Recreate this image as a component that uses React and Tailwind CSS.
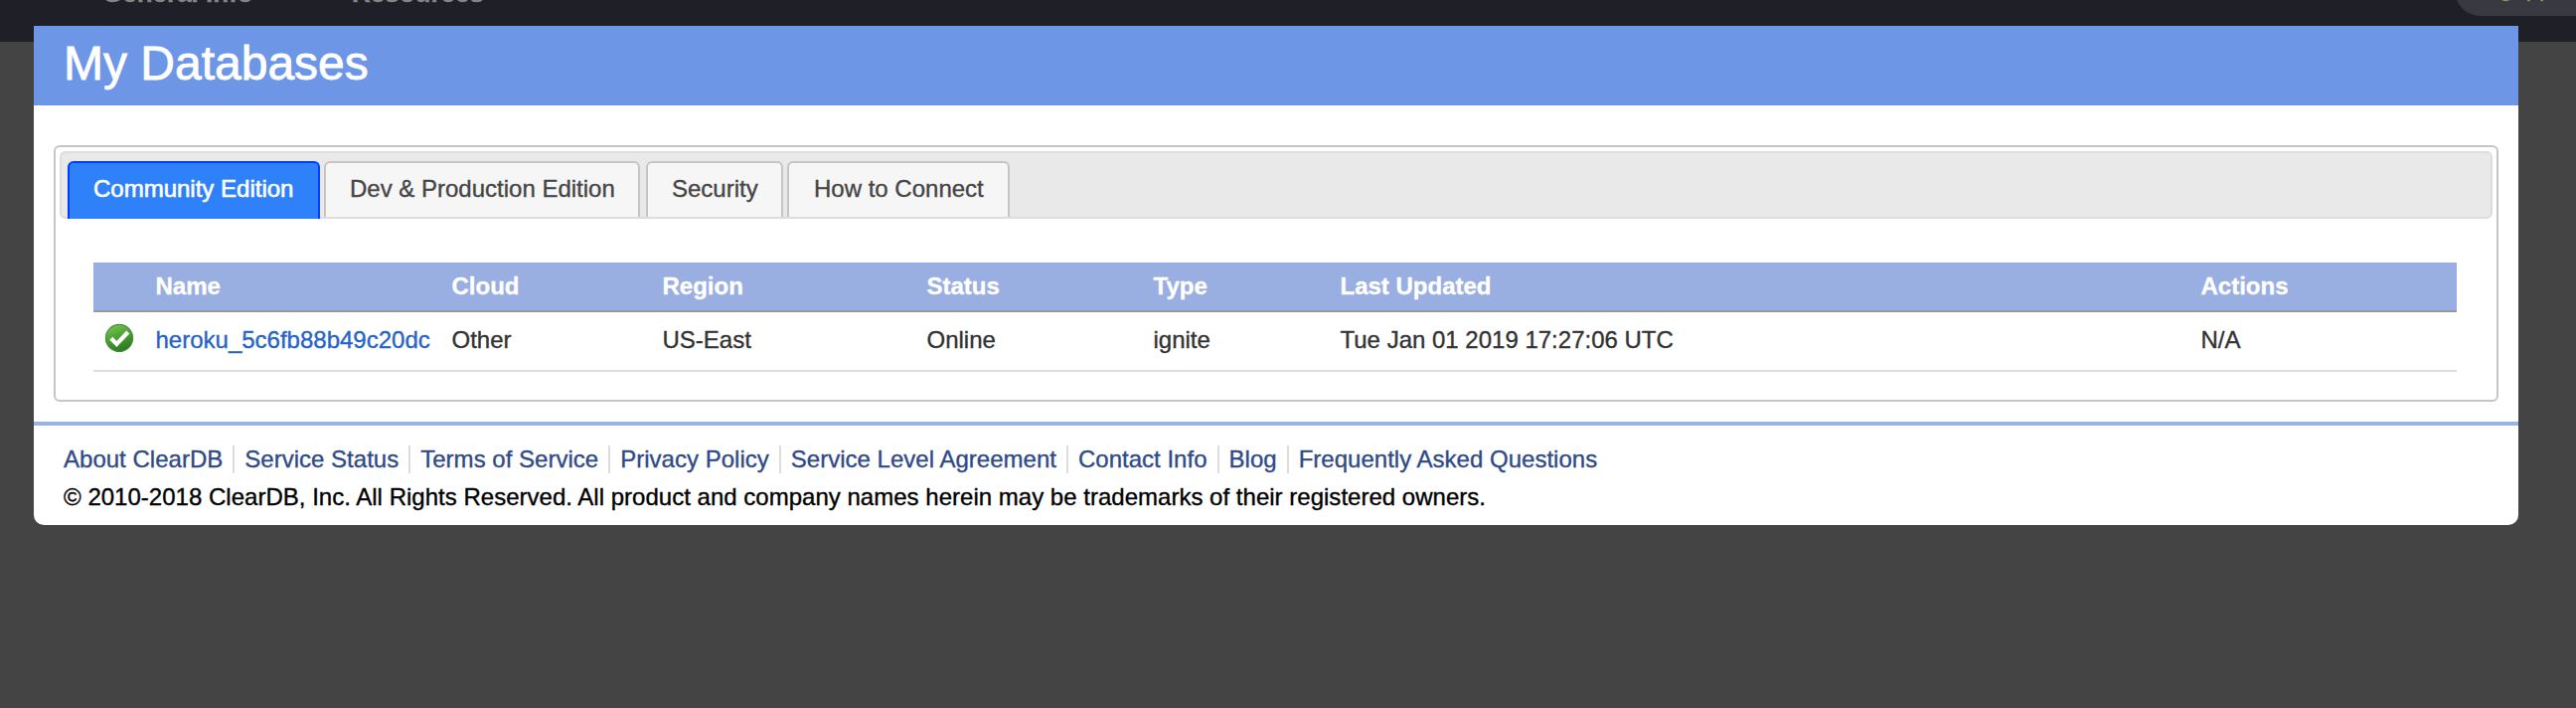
import React from "react";

const tabs = [
  { label: "Community Edition", cls: "w-[254px] mr-1 pl-[24px]" },
  { label: "Dev & Production Edition", cls: "w-[318px] mr-1.5 pl-[24px]" },
  { label: "Security", cls: "w-[138px] mr-1 pl-[24px]" },
  { label: "How to Connect", cls: "w-[224px] pl-[25px]" },
];

const links = [
  "About ClearDB",
  "Service Status",
  "Terms of Service",
  "Privacy Policy",
  "Service Level Agreement",
  "Contact Info",
  "Blog",
  "Frequently Asked Questions",
];

const columns = [
  ["Cloud", "Other"],
  ["Region", "US-East"],
  ["Status", "Online"],
  ["Type", "ignite"],
  ["Last Updated", "Tue Jan 01 2019 17:27:06 UTC"],
  ["Actions", "N/A"],
];

const grid = "grid grid-cols-[62.5px_298px_212px_266px_228px_188px_866px_1fr]";

function CheckIcon() {
  return (
    <svg className="ml-[11px] mt-[11px]" width="30" height="30" viewBox="0 0 30 30">
      <defs>
        <linearGradient id="ball" x1="0" y1="0" x2="0.4" y2="1">
          <stop offset="0" stopColor="#86c95a" />
          <stop offset="0.5" stopColor="#4fa433" />
          <stop offset="1" stopColor="#2c7d22" />
        </linearGradient>
      </defs>
      <circle cx="15" cy="15" r="13.6" fill="url(#ball)" stroke="#4a8f40" strokeWidth="1.2" />
      <path d="M6.8 15.2 L12.4 21 L23.8 9" fill="none" stroke="#fff" strokeWidth="4.2" />
    </svg>
  );
}

export default function App() {
  return (
    <div className="relative h-[712px] w-[2592px] overflow-hidden bg-[#444444] font-['Liberation_Sans',Arial,sans-serif] text-[24px] leading-[28px] [-webkit-text-stroke:0.35px]">
      <div className="absolute inset-x-0 top-0 h-[42px] overflow-hidden bg-[#1f1f27] text-[#858585]">
        <span className="absolute left-[103px] top-[-21px] whitespace-nowrap text-[26px] font-bold">General Info</span>
        <span className="absolute left-[354px] top-[-21px] whitespace-nowrap text-[26px] font-bold">Resources</span>
        <div className="absolute left-[2470px] top-[-36px] h-[52px] w-[200px] rounded-[26px] bg-[#393941]">
          <span className="absolute left-[45px] top-[10px] whitespace-nowrap text-[#7f9f4a]">gapp</span>
        </div>
      </div>

      <main className="relative ml-[34px] mt-[26px] h-[502px] w-[2500px] rounded-b-[10px] bg-white">
        <header className="h-20 bg-[#6d96e6] pl-[30px] pt-[10px] text-[48px] leading-[56px] text-white [-webkit-text-stroke:0.8px]">
          My Databases
        </header>

        <section className="mx-5 mt-10 h-[258px] rounded-[6px] border-2 border-[#c5c5c5] p-1">
          <nav className="flex h-[68px] rounded-[6px] border-2 border-[#dddddd] bg-[#e9e9e9] pl-1.5 pt-2">
            {tabs.map((t, i) => (
              <div
                key={t.label}
                className={`${t.cls} whitespace-nowrap rounded-t-[6px] border-2 border-b-0 pt-[12px] ${
                  i === 0
                    ? "h-[58px] border-[#003eff] bg-[#2f81f9] text-white [-webkit-text-stroke:0.6px]"
                    : "h-[56px] border-[#c5c5c5] bg-[#f6f6f6] text-[#454545]"
                }`}
              >
                {t.label}
              </div>
            ))}
          </nav>

          <div className="ml-[34px] mt-11 w-[2378px]">
            <div className={`${grid} h-[50px] border-b-2 border-[#999999] bg-[#99aee1] pt-[10px] font-bold text-white`}>
              <span />
              <span>Name</span>
              {columns.map(([h]) => (
                <span key={h}>{h}</span>
              ))}
            </div>
            <div className={`${grid} h-[60px] border-b-2 border-[#dddddd] text-[#333333]`}>
              <CheckIcon />
              <span className="pt-[14px] text-[#2663c8]">heroku_5c6fb88b49c20dc</span>
              {columns.map(([h, v]) => (
                <span key={h} className="whitespace-nowrap pt-[14px]">{v}</span>
              ))}
            </div>
          </div>
        </section>

        <footer className="mt-5 border-t-4 border-[#9ab3e2] pl-[30px] pt-5 tracking-[0.015px]">
          <ul className="flex text-[#2f4a87]">
            {links.map((l, i) => (
              <li
                key={l}
                className={`h-7 whitespace-nowrap ${i < links.length - 1 ? "mr-[10px] border-r-2 border-[#dddddd] pr-[10px]" : ""}`}
              >
                {l}
              </li>
            ))}
          </ul>
          <p className="mt-[10px] text-black">
            © 2010-2018 ClearDB, Inc. All Rights Reserved. All product and company names herein may be trademarks of their registered owners.
          </p>
        </footer>
      </main>
    </div>
  );
}
